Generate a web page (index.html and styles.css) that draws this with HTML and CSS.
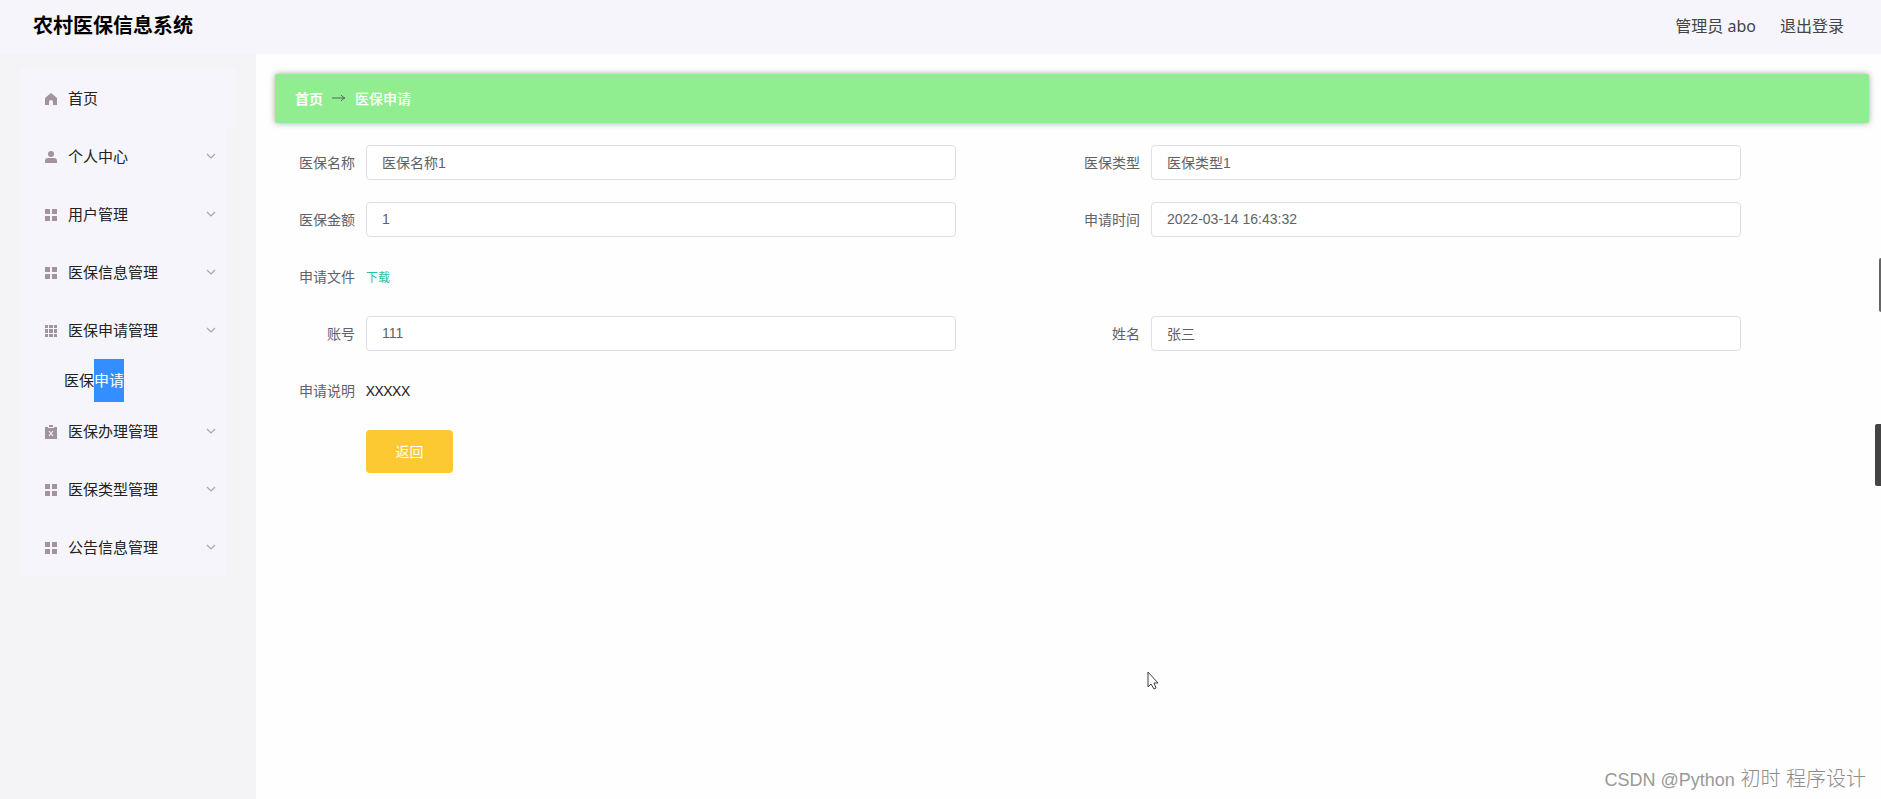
FILE: index.html
```
<!DOCTYPE html>
<html lang="zh-CN">
  <head>
    <meta charset="utf-8">
    <title>农村医保信息系统</title>
    <link rel="stylesheet" href="styles.css">
  </head>
  <body>
    <svg class="sprite" aria-hidden="true">
      <symbol id="arrow-down" viewBox="0 0 10 6">
        <path d="M1 1l4 4 4-4" fill="none" stroke="#aaa4ae" stroke-width="1.2"/>
      </symbol>
      <symbol id="menu" viewBox="0 0 12 12">
        <path d="M0 0h5v5H0zM7 0h5v5H7zM0 7h5v5H0zM7 7h5v5H7z"/>
      </symbol>
      <symbol id="grid" viewBox="0 0 12 12">
        <path d="M0 0h3v3H0zM4 0h4v3H4zM9 0h3v3H9zM0 4h3v4H0zM4 4h4v4H4zM9 4h3v4H9zM0 9h3v3H0zM4 9h4v3H4zM9 9h3v3H9z"/>
      </symbol>
    </svg>

    <header class="header">
      <h1 class="title">农村医保信息系统</h1>
      <div class="user">
        <span>管理员 abo</span>
        <a href="#">退出登录</a>
      </div>
    </header>

    <div class="container">
      <aside class="sidebar">
        <nav class="menu">
          <a class="menu-item home" href="#">
            <svg class="icon" viewBox="0 0 12 12"><path d="M6 0L12 5V12H8V9a2 2 0 0 0-4 0v3H0V5z"/></svg>
            首页
          </a>
          <button class="menu-item" type="button">
            <svg class="icon" viewBox="0 0 12 12"><circle cx="6" cy="3" r="3"/><path d="M0 12v-2q0-3 3-3h6q3 0 3 3v2z"/></svg>
            个人中心
            <svg class="arrow"><use href="#arrow-down"/></svg>
          </button>
          <button class="menu-item" type="button">
            <svg class="icon"><use href="#menu"/></svg>
            用户管理
            <svg class="arrow"><use href="#arrow-down"/></svg>
          </button>
          <button class="menu-item" type="button">
            <svg class="icon"><use href="#menu"/></svg>
            医保信息管理
            <svg class="arrow"><use href="#arrow-down"/></svg>
          </button>
          <button class="menu-item" type="button">
            <svg class="icon"><use href="#grid"/></svg>
            医保申请管理
            <svg class="arrow"><use href="#arrow-down"/></svg>
          </button>
          <a class="submenu-item" href="#">医保<span class="selected">申请</span></a>
          <button class="menu-item" type="button">
            <svg class="icon tall" viewBox="0 0 12 14"><path d="M0 2h3v1h6V2h3v12H0z"/><path d="M4 0h4v2H4z"/><path d="M4 6l4 5M8 6l-4 5" stroke="#f5f5fb" stroke-width="1.2"/></svg>
            医保办理管理
            <svg class="arrow"><use href="#arrow-down"/></svg>
          </button>
          <button class="menu-item" type="button">
            <svg class="icon"><use href="#menu"/></svg>
            医保类型管理
            <svg class="arrow"><use href="#arrow-down"/></svg>
          </button>
          <button class="menu-item" type="button">
            <svg class="icon"><use href="#menu"/></svg>
            公告信息管理
            <svg class="arrow"><use href="#arrow-down"/></svg>
          </button>
        </nav>
      </aside>

      <main class="main">
        <nav class="breadcrumb">
          <a class="root" href="#">首页</a>
          <svg class="separator" viewBox="0 0 14 8"><path d="M0 4h12M9 1q1 2 4 3q-3 1-4 3" fill="none" stroke="#4f6b55"/></svg>
          <span>医保申请</span>
        </nav>

        <form class="form">
          <div class="field">
            <label for="name">医保名称</label>
            <input type="text" id="name" value="医保名称1" readonly>
          </div>
          <div class="field">
            <label for="type">医保类型</label>
            <input type="text" id="type" value="医保类型1" readonly>
          </div>
          <div class="field">
            <label for="amount">医保金额</label>
            <input type="text" id="amount" value="1" readonly>
          </div>
          <div class="field">
            <label for="time">申请时间</label>
            <input type="text" id="time" value="2022-03-14 16:43:32" readonly>
          </div>
          <div class="field wide">
            <span class="label">申请文件</span>
            <a class="download" href="#">下载</a>
          </div>
          <div class="field">
            <label for="account">账号</label>
            <input type="text" id="account" value="111" readonly>
          </div>
          <div class="field">
            <label for="realname">姓名</label>
            <input type="text" id="realname" value="张三" readonly>
          </div>
          <div class="field wide">
            <span class="label">申请说明</span>
            <span class="note">XXXXX</span>
          </div>
          <div class="actions wide">
            <button class="back" type="button">返回</button>
          </div>
        </form>
      </main>
    </div>

    <div class="handle handle-top"></div>
    <div class="handle handle-bottom"></div>
    <svg class="cursor" viewBox="0 0 12 19"><path d="M1 1v15l3-3 3 5 2-1-2-5h4z" fill="#fff" stroke="#3c3c44"/></svg>
    <div class="watermark"><span class="latin">CSDN @Python</span> 初时 程序设计</div>
  </body>
</html>
```

FILE: styles.css
```
* {
  box-sizing: border-box;
}

body {
  display: flex;
  flex-direction: column;
  position: relative;
  min-height: 100vh;
  margin: 0;
  font: normal 14px "Noto Sans", "Noto Sans CJK SC", sans-serif;
  color: #606266;
  background: #fefefe;
  overflow-x: hidden;
}

a {
  color: inherit;
  text-decoration: none;
}

.sprite {
  position: absolute;
  width: 0;
  height: 0;
}

/* header */
.header {
  display: flex;
  align-items: center;
  justify-content: space-between;
  height: 54px;
  padding: 0 37px 3px 33px;
  background: #f5f5fb;
}

.title {
  margin: 0;
  font-size: 20px;
  line-height: 28px;
  color: #000;
}

.user {
  display: flex;
  gap: 24px;
  font-size: 16px;
  line-height: 24px;
  color: #444;
}

.container {
  display: flex;
  flex: 1;
}

/* sidebar */
.sidebar {
  width: 256px;
  padding: 15px 20px;
  background: #f4f4f6;
}

.menu {
  display: flex;
  flex-direction: column;
}

.menu-item {
  display: flex;
  align-items: center;
  width: 207px;
  height: 58px;
  padding: 0 11px 2px 25px;
  border: none;
  font: inherit;
  font-size: 15px;
  text-align: left;
  color: #222;
  background: #f5f5fb;
  cursor: pointer;
}

.menu-item.home {
  width: 216px;
}

.icon {
  width: 12px;
  height: 12px;
  margin: 4px 11px 0 0;
  fill: #a3929f;
}

.icon.tall {
  height: 14px;
}

.arrow {
  width: 10px;
  height: 6px;
  margin: 2px 0 0 auto;
}

.submenu-item {
  width: 207px;
  padding-left: 44px;
  font-size: 15px;
  line-height: 43px;
  color: #222;
  background: #f5f5fb;
}

.selected {
  display: inline-block;
  color: #fff;
  background: #338fff;
}

/* content */
.main {
  flex: 1;
  min-width: 0;
  padding: 20px 12px 20px 19px;
}

.breadcrumb {
  display: flex;
  align-items: center;
  gap: 9px;
  height: 49px;
  padding: 0 20px 2px;
  border-radius: 2px;
  font-weight: 500;
  color: #fff;
  background: #90ee90;
  box-shadow: 0 0 6px rgba(0, 0, 0, .35);
}

.breadcrumb .root {
  font-weight: 700;
}

.separator {
  width: 14px;
  height: 8px;
}

.form {
  display: grid;
  grid-template-columns: 1fr 1fr;
  row-gap: 22px;
  padding: 22px 10px 0 14px;
}

.wide {
  grid-column: 1 / 3;
}

.field {
  display: flex;
  align-items: center;
  width: 85%;
  height: 35px;
}

.field label,
.field .label {
  width: 77px;
  padding: 0 11px 2px 0;
  text-align: right;
}

.field input {
  flex: 1;
  min-width: 0;
  height: 35px;
  padding: 0 15px 2px;
  border: 1px solid #dcdfe6;
  border-radius: 4px;
  font: normal 14px "Liberation Sans", "Noto Sans CJK SC", sans-serif;
  color: #606266;
  background: #fff;
  outline: none;
}

.download {
  font-size: 12px;
  color: #2fbf9f;
}

.note {
  padding-bottom: 2px;
  font-size: 15px;
  color: #222;
}

.actions {
  padding-left: 77px;
}

.back {
  width: 87px;
  height: 43px;
  padding: 0 0 2px;
  border: none;
  border-radius: 4px;
  font: inherit;
  color: #fff;
  background: #fdc932;
  cursor: pointer;
}

/* things floating above the page */
.handle {
  position: absolute;
  right: 0;
}

.handle-top {
  top: 258px;
  width: 2px;
  height: 54px;
  border-radius: 2px 0 0 2px;
  background: #666;
}

.handle-bottom {
  top: 424px;
  width: 6px;
  height: 62px;
  border-radius: 2px 0 0 2px;
  background: #444;
}

.cursor {
  position: absolute;
  top: 671px;
  left: 1147px;
  width: 12px;
  height: 19px;
}

.watermark {
  position: absolute;
  right: 15px;
  bottom: 5px;
  font: 300 20px/28px "Liberation Sans", "Noto Sans CJK SC", sans-serif;
  color: #8c8c8c;
}

.watermark .latin {
  font-size: 18px;
  color: #999;
}
```
